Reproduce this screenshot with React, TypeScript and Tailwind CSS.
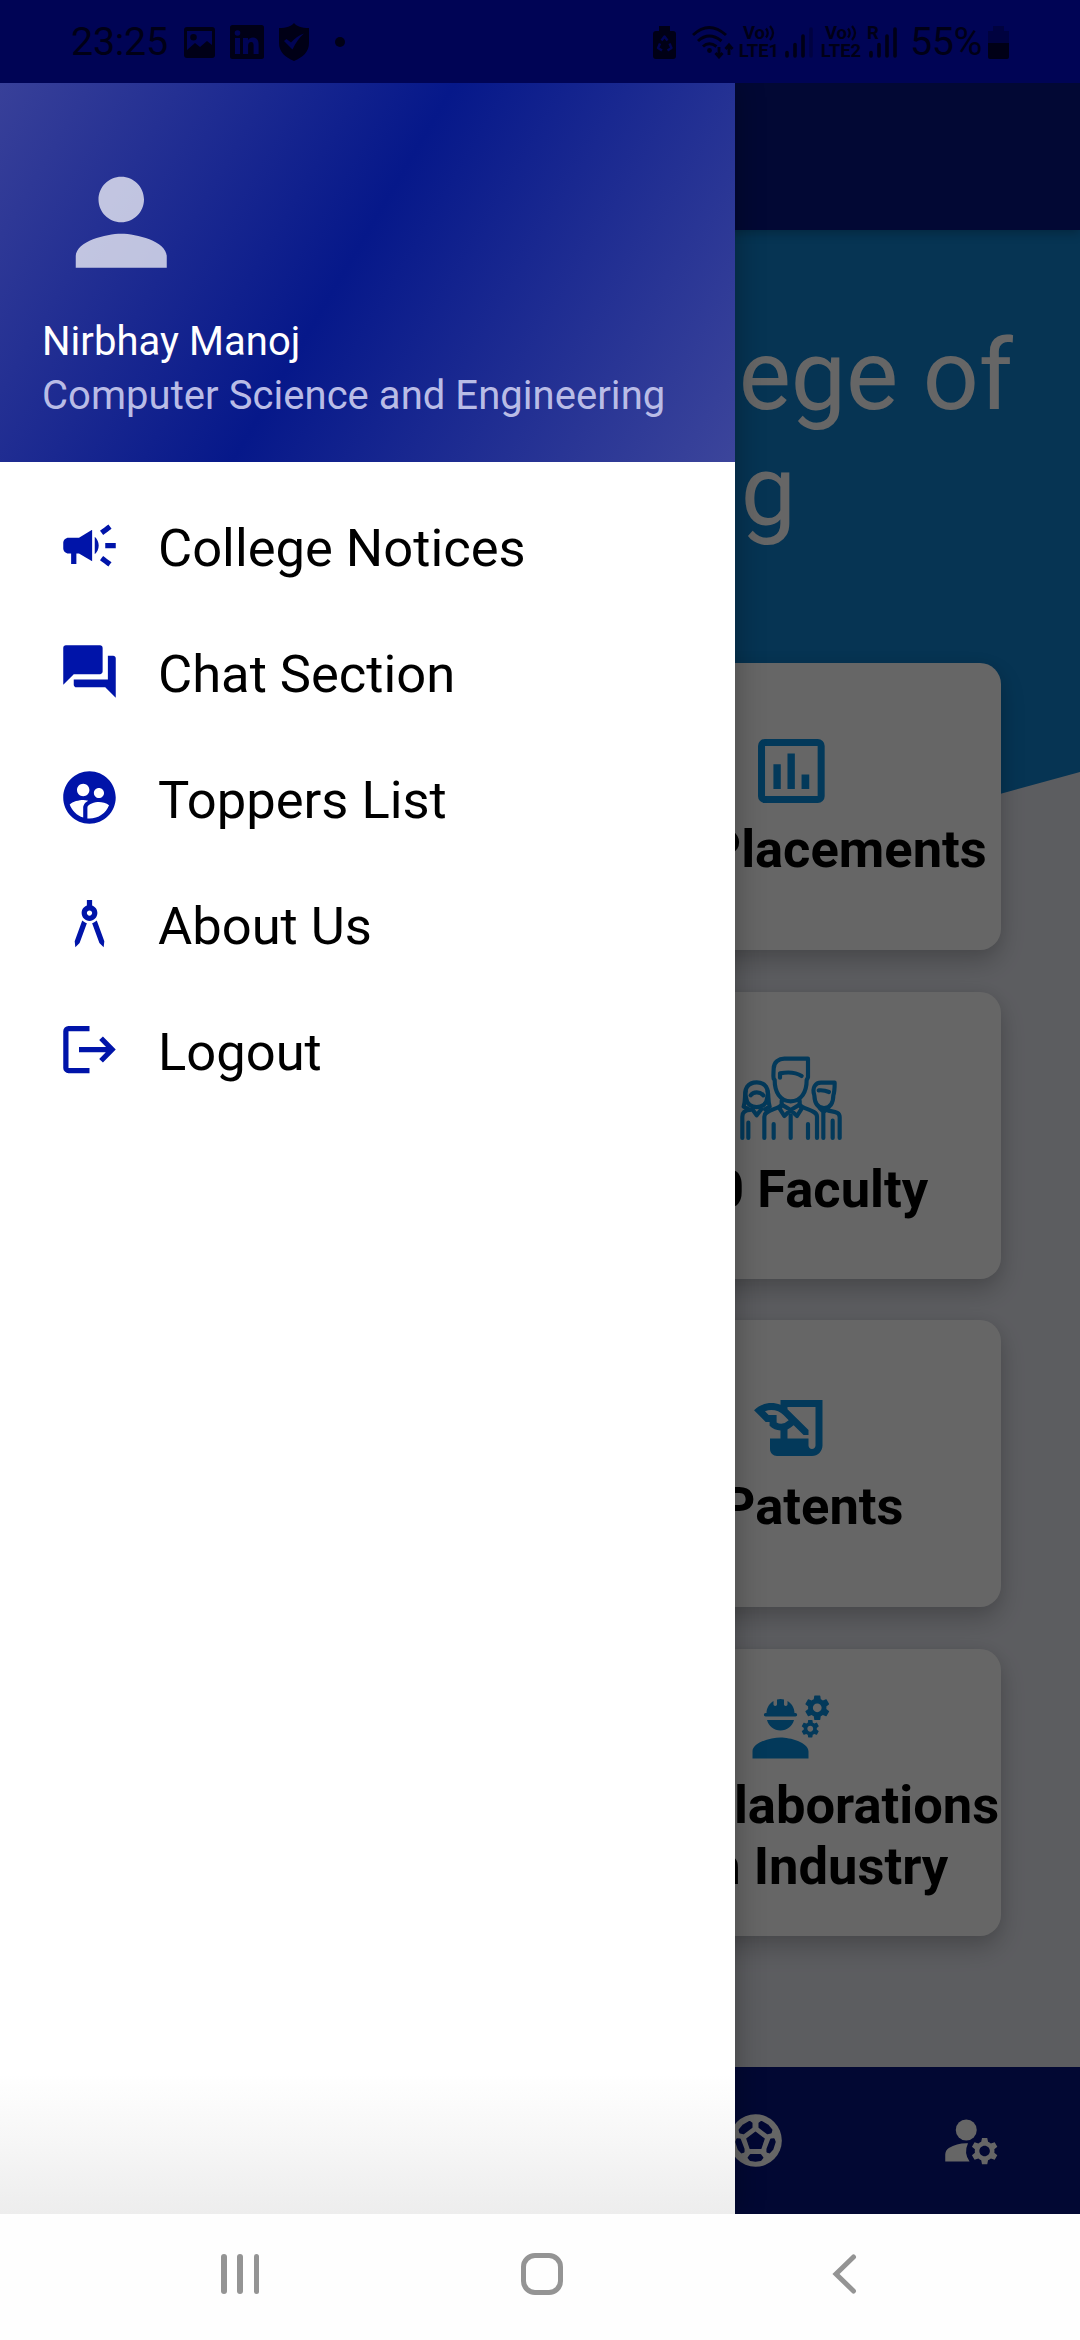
import type { ReactNode } from "react";
import {
  MdArchitecture,
  MdCampaign,
  MdEngineering,
  MdHistoryEdu,
  MdManageAccounts,
  MdPerson,
  MdQuestionAnswer,
  MdSupervisedUserCircle,
} from "react-icons/md";

function LogoutIcon() {
  return (
    <svg viewBox="0 0 24 24" className="size-[63px]" fill="none" stroke="currentColor" strokeWidth="2">
      <path d="M12 4H4a1 1 0 0 0-1 1v14a1 1 0 0 0 1 1h8" />
      <path d="M8 12h12.4M16.4 7.7l4.2 4.3-4.2 4.3" />
    </svg>
  );
}

function ChartIcon() {
  return (
    <svg viewBox="174 297 200 191" className="h-[64px] w-[67px]">
      <rect x="184.500" y="307.500" width="178" height="170" rx="10" fill="none" stroke="currentColor" strokeWidth="21" />
      <path d="M220 372h22v74h-22zM262 340h22v106h-22zM304 403h23v43h-23z" fill="currentColor" />
    </svg>
  );
}

function FacultyIcon() {
  return (
    <svg
      viewBox="118 255 312 258"
      className="h-[86px] w-[104px]"
      fill="none"
      stroke="currentColor"
      strokeWidth="12.5"
      strokeLinecap="round"
      strokeLinejoin="round"
    >
      <path d="M222 326c-2-10 0-20 0-30 0-20 16-30 32-30h71v56l-4 8c0 36-16 64-48 64s-48-28-48-64z" />
      <path d="M241 323v-13c22-4 46-4 65 8" />
      <path d="M246 392v12c-10 14-52 16-52 36v64M300 392v12c10 14 52 16 52 36v64M222 462v42M273 436v68M325 462v42" />
      <path d="M246 404l-6 12 14 22 19-18 19 18 14-22-6-12-27 16z" />
      <path d="M140 386c-10-30 6-49 31-49s40 19 31 49c-2 34-60 34-62 0z" />
      <path d="M138 364c-4 14 0 30-6 46l16 8M204 364c4 14 0 30 6 46l-14 8M153 376c8-12 28-12 38 0" />
      <path d="M152 420c-14 0-24 6-24 20v64M146 458v46M158 418l13 18 14-18" />
      <path d="M344 376c-8-24 4-38 20-38h41c0 12 0 26-4 38 0 24-10 38-28 38s-28-14-29-38z" />
      <path d="M357 361c12-1 22 1 31 5M360 414l12 12 14-12M386 422c20 4 34 4 34 20v62M371 428v76M399 452v52" />
    </svg>
  );
}

function FootballIcon() {
  const panels =
    "M479 489l6-4 18 10 12 14-2 8-10 2-24-18zM514 538l8-1 3 8-7 22-9 10-6-2 0-8z";
  return (
    <svg viewBox="387 461 160 160" className="size-[53px]">
      <circle cx="467" cy="541" r="79.500" fill="#ffffff" />
      <g fill="#05147f" stroke="#05147f" strokeWidth="6" strokeLinejoin="round">
        <path d="M467 516l26 20-10 29h-32l-10-29z" strokeWidth="4" />
        <path d={panels} />
        <path d={panels} transform="translate(934 0) scale(-1 1)" />
        <path d="M452 585h30l6 8-6 7-15 2-15-2-6-7z" />
      </g>
    </svg>
  );
}

const menu: { label: string; icon: ReactNode }[] = [
  { label: "College Notices", icon: <MdCampaign className="size-[63px]" /> },
  { label: "Chat Section", icon: <MdQuestionAnswer className="size-[63px]" /> },
  { label: "Toppers List", icon: <MdSupervisedUserCircle className="size-[63px]" /> },
  { label: "About Us", icon: <MdArchitecture className="size-[63px]" /> },
  { label: "Logout", icon: <LogoutIcon /> },
];

const cards: { lines: string[]; icon: ReactNode; top: string }[] = [
  {
    lines: ["95% Placements"],
    icon: <div className="flex h-[84px] items-center"><ChartIcon /></div>,
    top: "pt-[66px]",
  },
  {
    lines: ["100 Faculty"],
    icon: <div className="flex h-[98px] items-start"><FacultyIcon /></div>,
    top: "pt-[63px]",
  },
  { lines: ["8 Patents"], icon: <MdHistoryEdu className="size-[84px]" />, top: "pt-[66px]" },
  {
    lines: ["15 Collaborations", "With Industry"],
    icon: <MdEngineering className="size-[84px]" />,
    top: "pt-[36px]",
  },
];

function VoLte({ n, roaming }: { n: string; roaming?: boolean }) {
  return (
    <div className="flex">
      <div className="flex w-[42px] flex-col items-center text-[18.5px] leading-[18px] font-bold">
        <div className="flex items-center">
          <span>Vo</span>
          <svg viewBox="0 0 10 16" className="h-[16px] w-[10px]" fill="none" stroke="currentColor" strokeWidth="2.200">
            <path d="M1 3.500q3.500 4.500 0 9M5 1q6 7 0 14" />
          </svg>
        </div>
        <span>LTE{n}</span>
      </div>
      <div className={roaming ? "relative ml-[6px] w-[32px]" : "relative ml-[4px] w-[32px]"}>
        {roaming && <span className="absolute top-0 -left-px text-[18.5px] leading-[18px] font-bold">R</span>}
        <svg viewBox="0 0 32 36" className="h-[36px] w-[32px]" stroke="currentColor" strokeWidth="3.600" strokeLinecap="round">
          <path d="M3 28.500v3.500M11 20.500v11.500M19 12v20" />
          <path d="M27 5v27" opacity={roaming ? 1 : 0.3} />
        </svg>
      </div>
    </div>
  );
}

function StatusBar() {
  return (
    <div className="flex h-[83px] items-center bg-[#000455] pt-px pl-[71px] text-[#000016]">
      <span className="w-[113px] text-[39.5px] leading-none tracking-[-0.3px]">23:25</span>
      <svg viewBox="0 0 31 31" className="size-[31px]">
        <path
          fillRule="evenodd"
          fill="currentColor"
          d="M3 0h25a3 3 0 0 1 3 3v25a3 3 0 0 1-3 3H3a3 3 0 0 1-3-3V3a3 3 0 0 1 3-3zM3 4v19l8-7 5 4 7-6 5 4V4zM9.500 7a3.300 3.300 0 1 1 0 6.600 3.300 3.300 0 0 1 0-6.600z"
        />
      </svg>
      <svg viewBox="0 0 34 34" className="ml-[15px] size-[34px]">
        <rect width="34" height="34" rx="2.500" fill="currentColor" />
        <g fill="#000455">
          <circle cx="7.500" cy="8" r="2.800" />
          <path d="M5 13h5v16H5zM13 13h5v2.300c1-1.700 2.800-2.700 5-2.700 4.400 0 5.600 3 5.600 7V29h-5v-8.500c0-2-.5-3.600-2.500-3.600s-3 1.500-3 3.600V29H13z" />
        </g>
      </svg>
      <svg viewBox="0 0 30 38" className="ml-[15px] h-[38px] w-[30px]">
        <path fill="currentColor" d="M15 0c3 3.500 7 5 15 5v15c0 9-6 14-15 18C6 34 0 29 0 20V5c8 0 12-1.500 15-5z" />
        <path d="M5 18l2.500-2 4.500 3.500c4-4.500 8-7 13-9-5 4-8 9-11.500 16z" fill="#000455" />
      </svg>
      <span className="ml-[26px] size-[10px] rounded-full bg-current" />

      <svg viewBox="0 0 23 33" className="ml-[308px] h-[33px] w-[23px]">
        <path fill="currentColor" d="M6 0h11v5h3a3 3 0 0 1 3 3v22a3 3 0 0 1-3 3H3a3 3 0 0 1-3-3V8a3 3 0 0 1 3-3h3z" />
        <path
          d="M8.500 14.500l3-4 3 4M16.500 17.500l2 4.500-4 2.500M9 24.500l-4-2.500 2-4.500"
          fill="none"
          stroke="#000455"
          strokeWidth="2.400"
          strokeLinejoin="round"
        />
      </svg>
      <svg viewBox="0 0 42 34" className="ml-[16px] h-[34px] w-[42px]" fill="none" stroke="currentColor" strokeWidth="3">
        <path d="M1 10q16-15 33 0M6 16q11-10 23.500 0M11 21.500q6-5.500 13.500 0" />
        <circle cx="17.500" cy="25.500" r="2.400" fill="currentColor" stroke="none" />
        <path d="M27 22v9M23.500 28l3.500 4 3.500-4M37 30v-9M33.500 24l3.500-4 3.500 4" strokeWidth="2.800" />
      </svg>
      <div className="ml-[4px]"><VoLte n="1" /></div>
      <div className="ml-[4px]"><VoLte n="2" roaming /></div>
      <span className="ml-[10px] w-[78px] text-[39.5px] leading-none tracking-[-0.5px]">55%</span>
      <svg viewBox="0 0 21 33" className="h-[33px] w-[21px]" fill="currentColor">
        <path d="M5 0h11v5h5v12H0V5h5z" opacity=".35" />
        <path d="M0 17h21v14a2 2 0 0 1-2 2H2a2 2 0 0 1-2-2z" />
      </svg>
    </div>
  );
}

function HomeScreen() {
  return (
    <div className="flex h-full flex-col bg-[#e6e8f0]">
      <div className="z-10 h-[147px] bg-[#051482] shadow-[0_3px_10px_rgba(0,0,0,0.25)]" />
      <div className="relative min-h-0 flex-1">
        <svg viewBox="0 0 1080 740" className="absolute top-0 left-0 h-[740px] w-[1080px]">
          <path d="M0 0h1080v542L360 740 0 640z" fill="#0f82cf" />
        </svg>
        <div className="relative flex flex-col">
          <h1 className="flex h-[433px] flex-col pt-[88px] text-right text-[98.4px] leading-[115px] text-white">
            <span className="pr-[67px]">College of</span>
            <span className="pr-[284px]">Engineering</span>
          </h1>
          <div className="flex flex-col items-end gap-[41.67px] pr-[79px]">
            {cards.map((c) => (
              <div
                key={c.lines[0]}
                className={`flex h-[287px] w-[420px] flex-col items-center rounded-[21px] bg-white shadow-[0_12px_24px_rgba(0,0,0,0.2),0_0_16px_rgba(0,0,0,0.06)] ${c.top}`}
              >
                <div className="text-[#0890e2]">{c.icon}</div>
                <div className="mt-[6px] text-center text-[52.5px] leading-[61.5px] font-bold whitespace-nowrap text-black">
                  {c.lines.map((l) => (
                    <div key={l}>{l}</div>
                  ))}
                </div>
              </div>
            ))}
          </div>
        </div>
      </div>
      <div className="flex h-[147px] items-center justify-end bg-[#05147f] pr-[77px] text-white">
        <div className="mr-[158px]"><FootballIcon /></div>
        <MdManageAccounts className="size-[63px]" />
      </div>
    </div>
  );
}

function Drawer() {
  return (
    <aside className="absolute inset-y-0 left-0 flex w-[735px] flex-col bg-white shadow-[0_0_28px_rgba(0,0,0,0.3)]">
      <header className="flex h-[379px] flex-col bg-[linear-gradient(120.5deg,#384099_0%,#06188a_47.5%,#3c459b_100%)] pt-[71px] pl-[42px]">
        <MdPerson className="ml-[11px] size-[136.500px] text-white/72" />
        <div className="mt-[24px] text-[40px] leading-[54px] tracking-[0.05px] whitespace-nowrap text-white">
          <div>Nirbhay Manoj</div>
          <div className="text-[#b9bce6]">Computer Science and Engineering</div>
        </div>
      </header>
      <nav className="flex flex-1 flex-col pt-[20px]">
        {menu.map((m) => (
          <div key={m.label} className="flex h-[126px] items-center pl-[58px] text-[#0014a9]">
            {m.icon}
            <span className="ml-[37px] pt-[6px] text-[52.5px] leading-none text-black">{m.label}</span>
          </div>
        ))}
      </nav>
      <div className="h-[140px] bg-linear-to-b from-white to-[#ededed]" />
    </aside>
  );
}

function SystemNav() {
  return (
    <div className="flex h-[126px] items-center bg-[#fefefe] pb-[6px] text-[#949494]">
      <div className="ml-[221px] flex w-[38px] justify-between">
        <span className="h-[40px] w-[5.5px] rounded-full bg-current" />
        <span className="h-[40px] w-[5.5px] rounded-full bg-current" />
        <span className="h-[40px] w-[5.5px] rounded-full bg-current" />
      </div>
      <span className="ml-[262px] size-[42px] rounded-[14px] border-[5px] border-current" />
      <svg
        viewBox="0 0 26 42"
        className="ml-[269px] h-[42px] w-[26px]"
        fill="none"
        stroke="currentColor"
        strokeWidth="5"
        strokeLinecap="round"
      >
        <path d="M21.500 4L4 21l17.500 17" />
      </svg>
    </div>
  );
}

export default function App() {
  return (
    <div className="flex h-[2340px] w-[1080px] flex-col overflow-hidden font-[Roboto,sans-serif]">
      <StatusBar />
      <main className="relative min-h-0 flex-1 overflow-hidden">
        <HomeScreen />
        <div className="absolute inset-0 z-10 bg-black/60" />
        <div className="absolute inset-0 z-20"><Drawer /></div>
      </main>
      <SystemNav />
    </div>
  );
}
